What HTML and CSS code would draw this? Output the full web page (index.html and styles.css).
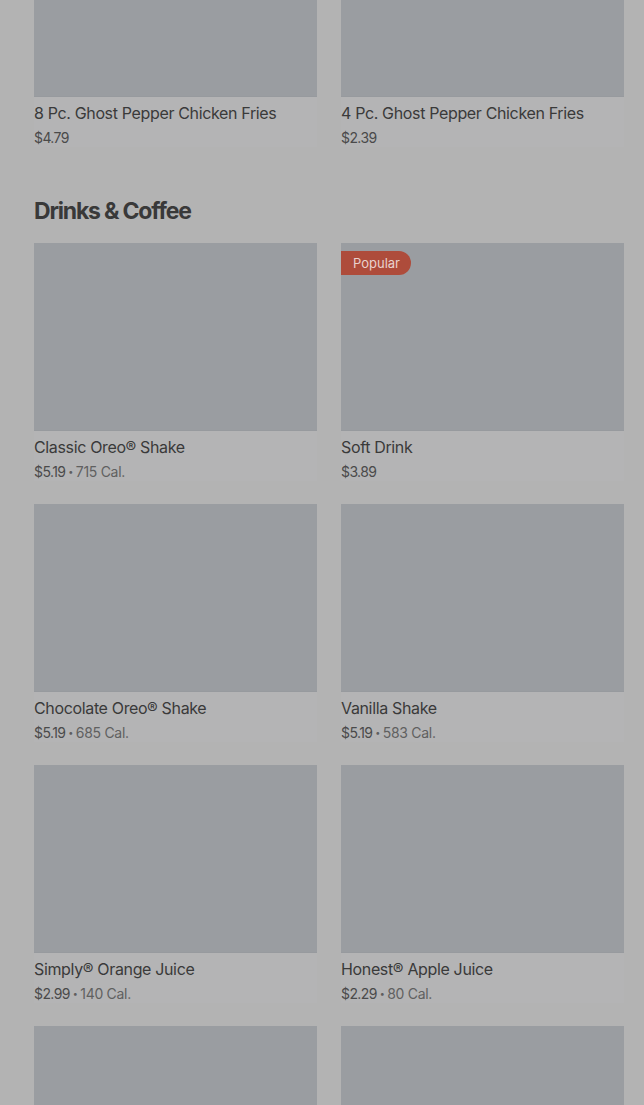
FILE: index.html
```html
<!DOCTYPE html>
<html lang="en">
<head>
    <meta charset="UTF-8">
    <meta name="viewport" content="width=device-width, initial-scale=1.0">
    <title>Menu</title>
    <link rel="stylesheet" href="styles.css">
</head>
<body>
    <main class="menu">
        <section class="menu-section menu-section-first">
            <div class="item-grid">
                <div class="item-card">
                    <div class="item-image"></div>
                    <div class="item-name">8 Pc. Ghost Pepper Chicken Fries</div>
                    <div class="item-meta"><span class="item-price">$4.79</span></div>
                </div>
                <div class="item-card">
                    <div class="item-image"></div>
                    <div class="item-name">4 Pc. Ghost Pepper Chicken Fries</div>
                    <div class="item-meta"><span class="item-price">$2.39</span></div>
                </div>
            </div>
        </section>

        <section class="menu-section">
            <h2 class="section-title">Drinks &amp; Coffee</h2>
            <div class="item-grid">
                <div class="item-card">
                    <div class="item-image"></div>
                    <div class="item-name">Classic Oreo&reg; Shake</div>
                    <div class="item-meta"><span class="item-price">$5.19</span><span class="dot">&bull;</span><span class="item-cal">715 Cal.</span></div>
                </div>
                <div class="item-card">
                    <div class="item-image">
                        <span class="badge">Popular</span>
                    </div>
                    <div class="item-name">Soft Drink</div>
                    <div class="item-meta"><span class="item-price">$3.89</span></div>
                </div>
                <div class="item-card">
                    <div class="item-image"></div>
                    <div class="item-name">Chocolate Oreo&reg; Shake</div>
                    <div class="item-meta"><span class="item-price">$5.19</span><span class="dot">&bull;</span><span class="item-cal">685 Cal.</span></div>
                </div>
                <div class="item-card">
                    <div class="item-image"></div>
                    <div class="item-name">Vanilla Shake</div>
                    <div class="item-meta"><span class="item-price">$5.19</span><span class="dot">&bull;</span><span class="item-cal">583 Cal.</span></div>
                </div>
                <div class="item-card">
                    <div class="item-image"></div>
                    <div class="item-name">Simply&reg; Orange Juice</div>
                    <div class="item-meta"><span class="item-price">$2.99</span><span class="dot">&bull;</span><span class="item-cal">140 Cal.</span></div>
                </div>
                <div class="item-card">
                    <div class="item-image"></div>
                    <div class="item-name">Honest&reg; Apple Juice</div>
                    <div class="item-meta"><span class="item-price">$2.29</span><span class="dot">&bull;</span><span class="item-cal">80 Cal.</span></div>
                </div>
                <div class="item-card">
                    <div class="item-image"></div>
                </div>
                <div class="item-card">
                    <div class="item-image"></div>
                </div>
            </div>
        </section>
    </main>
</body>
</html>
```

FILE: styles.css
```css
html, body {
    margin: 0;
    padding: 0;
}

body {
    font-family: Inter, "Liberation Sans", Arial, sans-serif;
    background-color: #b3b3b3;
    color: #3a3a3a;
    overflow: hidden;
    height: 1105px;
}

.menu {
    padding: 0 20px 0 34px;
}

.menu-section-first {
    margin-top: -91px;
}

.menu-section {
    padding-bottom: 48px;
}

.section-title {
    margin: 0 0 16px 0;
    font-size: 23px;
    line-height: 32px;
    font-weight: 700;
    letter-spacing: -1.2px;
    color: #393939;
}

.item-grid {
    display: grid;
    grid-template-columns: 283px 283px;
    column-gap: 24px;
    row-gap: 23px;
}

.item-card {
    background-color: #b4b4b5;
}

.item-image {
    position: relative;
    height: 187px;
    background-color: #9a9da1;
    border-bottom: 1px solid #979a9e;
}

.badge {
    position: absolute;
    top: 8px;
    left: 0;
    height: 24px;
    line-height: 24px;
    padding: 0 11px 0 12px;
    font-size: 13px;
    color: #e9d2cd;
    background-color: #ae4c3b;
    border-radius: 0 12px 12px 0;
}

.item-name {
    margin-top: 5px;
    font-size: 16px;
    line-height: 22px;
    letter-spacing: -0.35px;
    color: #3a3a3a;
}

.item-meta {
    margin-top: 5px;
    font-size: 14px;
    line-height: 18px;
    letter-spacing: -0.6px;
}

.item-price {
    color: #4a4a4a;
}

.dot {
    margin: 0 3px;
    font-size: 9px;
    vertical-align: 2px;
    color: #5e5e5e;
}

.item-cal {
    color: #606060;
    letter-spacing: -0.3px;
}
```
